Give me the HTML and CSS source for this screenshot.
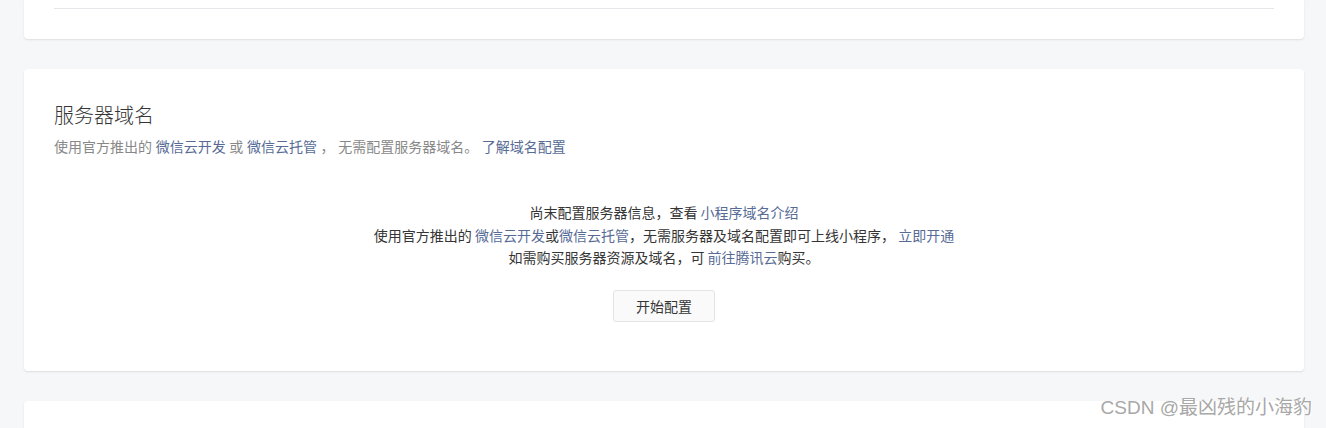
FILE: index.html
```html
<!DOCTYPE html>
<html lang="zh-CN">
<head>
<meta charset="utf-8">
<title>服务器域名</title>
<link rel="stylesheet" href="styles.css">
</head>
<body>
<div class="page">
  <section class="card card-top">
    <div class="divider"></div>
  </section>

  <section class="card card-main">
    <h2 class="title">服务器域名</h2>
    <p class="desc">使用官方推出的 <a class="link" href="#">微信云开发</a> 或 <a class="link" href="#">微信云托管</a> ， 无需配置服务器域名。 <a class="link" href="#">了解域名配置</a></p>
    <div class="empty">
      <p class="empty-line">尚末配置服务器信息，查看 <a class="link" href="#">小程序域名介绍</a></p>
      <p class="empty-line">使用官方推出的 <a class="link" href="#">微信云开发</a>或<a class="link" href="#">微信云托管</a>，无需服务器及域名配置即可上线小程序， <a class="link" href="#">立即开通</a></p>
      <p class="empty-line">如需购买服务器资源及域名，可 <a class="link" href="#">前往腾讯云</a>购买。</p>
      <button class="btn" type="button">开始配置</button>
    </div>
  </section>

  <section class="card card-bottom"></section>
</div>
<div class="watermark">CSDN @最凶残的小海豹</div>
</body>
</html>
```

FILE: styles.css
```css
html, body {
  margin: 0;
  padding: 0;
  height: 100%;
  overflow: hidden;
}
body {
  background: #f6f7f9;
  font-family: "Noto Sans CJK SC", "Liberation Sans", sans-serif;
  color: #353535;
  position: relative;
}
.page {
  width: 1280px;
  margin-left: 24px;
  display: flex;
  flex-direction: column;
  gap: 30px;
}
.card {
  background: #fff;
  border-radius: 4px;
  box-shadow: 0 1px 2px rgba(0, 0, 0, 0.1);
  box-sizing: border-box;
}
.card-top {
  padding: 8px 30px 30px;
  border-top-left-radius: 0;
  border-top-right-radius: 0;
}
.divider {
  height: 1px;
  background: #e7e7eb;
}
.card-main {
  height: 302px;
  padding: 32px 30px 0;
}
.title {
  margin: 0;
  font-size: 20px;
  line-height: 28px;
  font-weight: 300;
  color: #353535;
}
.desc {
  margin: 7px 0 0;
  font-size: 14px;
  line-height: 20px;
  color: #888;
  word-spacing: 0.5px;
}
.link {
  color: #576b95;
  text-decoration: none;
}
.empty {
  margin-top: 45px;
  display: flex;
  flex-direction: column;
  align-items: center;
}
.empty-line {
  margin: 0;
  font-size: 14px;
  line-height: 22.5px;
  color: #353535;
  text-align: center;
}
.btn {
  margin-top: 21px;
  width: 102px;
  height: 32px;
  border: 1px solid #e4e4e4;
  border-radius: 3px;
  background: #fafafa;
  font-family: inherit;
  font-size: 14px;
  color: #353535;
  padding: 0;
}
.card-bottom {
  height: 27px;
  border-bottom-left-radius: 0;
  border-bottom-right-radius: 0;
}
.watermark {
  position: absolute;
  right: 14px;
  top: 395px;
  font-family: "Liberation Sans", "Noto Sans CJK SC", sans-serif;
  font-size: 19px;
  line-height: 26px;
  color: #a8a8a8;
  text-shadow: 0 0 1px #fff, 1px 1px 0 #fff;
}
```
